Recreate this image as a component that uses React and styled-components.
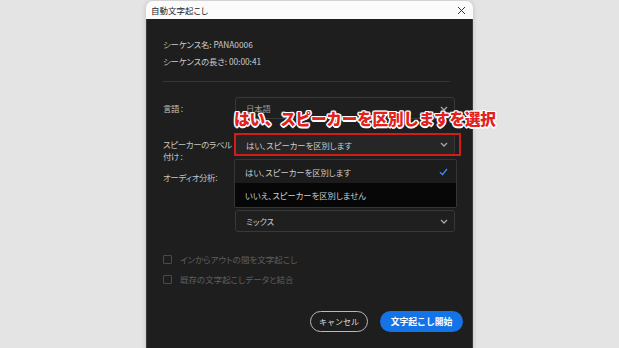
import React from 'react'
import styled, { createGlobalStyle } from 'styled-components'

const GlobalStyle = createGlobalStyle`
  html, body {
    margin: 0;
    padding: 0;
    background: #e4e4e4;
    overflow: hidden;
  }
  * { box-sizing: border-box; }
`

const Chevron = () => (
  <svg width="8" height="5" viewBox="0 0 8 5">
    <path d="M1 1 L4 4 L7 1" fill="none" stroke="#a8a8a8" strokeWidth="1.3" />
  </svg>
)

const Check = () => (
  <svg width="9" height="8" viewBox="0 0 9 8">
    <path d="M1 4.2 L3.5 6.6 L8 1" fill="none" stroke="#3b82e8" strokeWidth="1.5" />
  </svg>
)

const CloseIcon = () => (
  <svg width="9" height="9" viewBox="0 0 9 9">
    <path d="M1 1 L8 8 M8 1 L1 8" stroke="#333" strokeWidth="1" />
  </svg>
)

const Select = ({ value, active, dim }) => (
  <SelectBox active={active}>
    <SelectText dim={dim}>{value}</SelectText>
    <Chevron />
  </SelectBox>
)

const App = () => {
  return (
    <Page>
      <GlobalStyle />
      <Dialog>
        <TitleBar>
          <Title>自動文字起こし</Title>
          <CloseIcon />
        </TitleBar>
        <Body>
          <Info>
            <p>シーケンス名: PANA0006</p>
            <p>シーケンスの長さ: 00:00:41</p>
          </Info>
          <Divider />
          <Form>
            <Row height={22} gap={15}>
              <Label>言語 :</Label>
              <Control>
                <Select value="日本語" dim />
                <Callout>はい、スピーカーを区別しますを選択</Callout>
              </Control>
            </Row>
            <Row height={21} gap={11}>
              <Label top>スピーカーのラベル<br />付け :</Label>
              <Control>
                <Select value="はい、スピーカーを区別します" active />
                <RedFrame />
                <Menu>
                  <MenuItem>
                    はい、スピーカーを区別します
                    <Check />
                  </MenuItem>
                  <MenuItem selected>いいえ、スピーカーを区別しません</MenuItem>
                </Menu>
              </Control>
            </Row>
            <Row height={22} gap={22}>
              <Label>オーディオ分析:</Label>
              <Control>
                <Select value="" />
              </Control>
            </Row>
            <Row height={22} gap={0}>
              <Label />
              <Control>
                <Select value="ミックス" />
              </Control>
            </Row>
          </Form>
          <Checks>
            <CheckRow><Box />インからアウトの間を文字起こし</CheckRow>
            <CheckRow><Box />既存の文字起こしデータと結合</CheckRow>
          </Checks>
          <Buttons>
            <Button width={58}>キャンセル</Button>
            <Button width={83} primary>文字起こし開始</Button>
          </Buttons>
        </Body>
      </Dialog>
    </Page>
  )
}

export default App

const Page = styled.div`
  width: 619px;
  height: 348px;
  display: flex;
  justify-content: center;
  padding-top: 1px;
  font-family: "Noto Sans CJK JP", "Noto Sans", sans-serif;
  font-feature-settings: "palt";
  overflow: hidden;
`
const Dialog = styled.div`
  width: 327px;
  height: 370px;
  flex-shrink: 0;
  display: flex;
  flex-direction: column;
  border-radius: 7px 7px 0 0;
  box-shadow: 0 0 5px rgba(0, 0, 0, 0.18);
`
const TitleBar = styled.div`
  height: 18px;
  background: #fbfbfb;
  border-radius: 7px 7px 0 0;
  display: flex;
  align-items: center;
  justify-content: space-between;
  padding: 0 7px 0 5px;
`
const Title = styled.span`
  font-size: 8.5px;
  color: #1c1c1c;
`
const Body = styled.div`
  flex: 1;
  background: #1e1e1e;
  border: 1px solid #3a3a3a;
  border-top: none;
  padding: 17px 16px 0 16px;
  display: flex;
  flex-direction: column;
`
const Info = styled.div`
  p {
    margin: 0;
    font-size: 8.3px;
    line-height: 17px;
    color: #cccccc;
  }
`
const Divider = styled.div`
  height: 1px;
  background: #353535;
  margin: 11px 6px 15px 0;
`
const Form = styled.div`
  display: flex;
  flex-direction: column;
  position: relative;
`
const Row = styled.div`
  display: flex;
  align-items: center;
  height: ${p => p.height}px;
  margin-bottom: ${p => p.gap}px;
`
const Label = styled.div`
  width: 72px;
  flex-shrink: 0;
  font-size: 8.5px;
  line-height: 12px;
  letter-spacing: -0.4px;
  color: #c4c4c4;
  align-self: ${p => (p.top ? 'flex-start' : 'center')};
  margin-top: ${p => (p.top ? '4px' : '0')};
  white-space: nowrap;
`
const Control = styled.div`
  position: relative;
  width: 220px;
  height: 100%;
`
const SelectBox = styled.div`
  height: 100%;
  display: flex;
  align-items: center;
  justify-content: space-between;
  padding: 0 6px 0 10px;
  background: ${p => (p.active ? '#262626' : '#1f1f1f')};
  border: 1px solid #383838;
  border-radius: 3px;
`
const SelectText = styled.span`
  font-size: 8.3px;
  color: ${p => (p.dim ? '#9c9c9c' : '#cccccc')};
`
const Callout = styled.div`
  position: absolute;
  left: -1px;
  top: 11px;
  z-index: 3;
  white-space: nowrap;
  font-size: 15.6px;
  line-height: 20px;
  font-weight: 900;
  font-feature-settings: normal;
  letter-spacing: -0.2px;
  color: #e3201b;
  text-shadow:
    1.5px 0 0 #fff, -1.5px 0 0 #fff, 0 1.5px 0 #fff, 0 -1.5px 0 #fff,
    1px 1px 0 #fff, -1px -1px 0 #fff, 1px -1px 0 #fff, -1px 1px 0 #fff;
`
const RedFrame = styled.div`
  position: absolute;
  left: -1px;
  top: -1px;
  right: -6px;
  bottom: -1px;
  border: 2px solid #d11d18;
  z-index: 2;
`
const Menu = styled.div`
  position: absolute;
  top: calc(100% + 4px);
  left: -1px;
  width: 223px;
  z-index: 4;
  background: #1c1c1c;
  border: 1px solid #363636;
  border-radius: 2px;
  overflow: hidden;
`
const MenuItem = styled.div`
  height: ${p => (p.selected ? '24px' : '23px')};
  display: flex;
  align-items: center;
  justify-content: space-between;
  padding: 0 8px 0 10px;
  font-size: 8.3px;
  color: #cccccc;
  background: ${p => (p.selected ? '#070707' : 'transparent')};
`
const Checks = styled.div`
  margin-top: 17px;
  display: flex;
  flex-direction: column;
`
const CheckRow = styled.div`
  height: 20px;
  display: flex;
  align-items: center;
  gap: 8px;
  font-size: 8.5px;
  color: #5e5e5e;
`
const Box = styled.span`
  width: 9px;
  height: 9px;
  border: 1px solid #4a4a4a;
  border-radius: 1px;
`
const Buttons = styled.div`
  margin-top: 22px;
  display: flex;
  justify-content: flex-end;
  gap: 12px;
  margin-right: -7px;
`
const Button = styled.button`
  width: ${p => p.width}px;
  height: 21px;
  margin: 0;
  padding: 0;
  border-radius: 11px;
  font-family: inherit;
  font-feature-settings: normal;
  font-size: ${p => (p.primary ? '8.8px' : '8px')};
  font-weight: ${p => (p.primary ? 700 : 400)};
  color: ${p => (p.primary ? '#fff' : '#dcdcdc')};
  background: ${p => (p.primary ? '#1473e6' : 'transparent')};
  border: ${p => (p.primary ? 'none' : '1.5px solid #b9b9b9')};
`
